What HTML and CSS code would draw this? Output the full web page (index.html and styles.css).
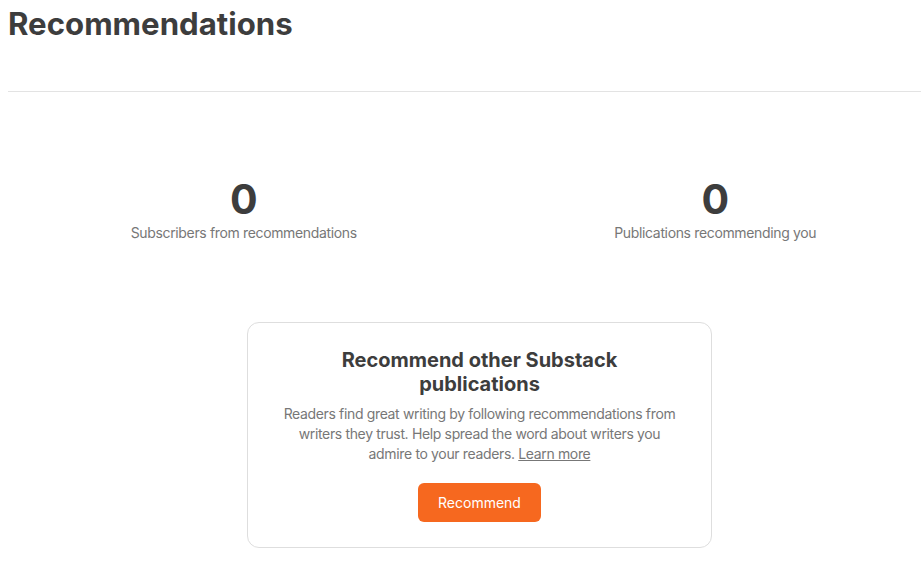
FILE: index.html
```html
<!DOCTYPE html>
<html>
<head>
<meta charset="utf-8">
<link rel="stylesheet" href="styles.css">
</head>
<body>
<main class="page">
  <h1 class="title">Recommendations</h1>
  <hr class="divider">
  <section class="stats">
    <div class="stat">
      <div class="stat-value">0</div>
      <div class="stat-label">Subscribers from recommendations</div>
    </div>
    <div class="stat">
      <div class="stat-value">0</div>
      <div class="stat-label">Publications recommending you</div>
    </div>
  </section>
  <section class="card-wrap">
    <div class="card">
      <h2 class="card-title">Recommend other Substack publications</h2>
      <p class="card-text">Readers find great writing by following recommendations from writers they trust. Help spread the word about writers you admire to your readers. <a class="link" href="#">Learn more</a></p>
      <button class="btn">Recommend</button>
    </div>
  </section>
</main>
</body>
</html>
```
FILE: styles.css
```css
html, body {
  overflow: hidden;
}
body {
  margin: 0;
  padding: 0 8px;
  background: #ffffff;
  font-family: Inter, "Noto Sans", sans-serif;
  color: #3d3d3d;
}
.page {
  width: 943px;
}
.title {
  margin: 0;
  padding-top: 5px;
  font-size: 31.2px;
  line-height: 38px;
  font-weight: 700;
  color: #3d3d3d;
}
.divider {
  margin: 48px 0 0;
  border: 0;
  border-top: 1px solid #e3e3e3;
}
.stats {
  display: grid;
  grid-template-columns: 1fr 1fr;
  padding-top: 85px;
}
.stat {
  display: flex;
  flex-direction: column;
  align-items: center;
}
.stat-value {
  font-size: 41px;
  line-height: 44px;
  font-weight: 700;
  color: #3d3d3d;
}
.stat-label {
  margin-top: 2px;
  font-size: 14px;
  line-height: 20px;
  letter-spacing: -0.35px;
  color: #777777;
}
.card-wrap {
  display: flex;
  justify-content: center;
  padding-top: 79px;
}
.card {
  width: 465px;
  box-sizing: border-box;
  border: 1px solid #dedede;
  border-radius: 12px;
  padding: 25px 32px 25px;
  display: flex;
  flex-direction: column;
  align-items: center;
  text-align: center;
}
.card-title {
  margin: 0;
  max-width: 300px;
  font-size: 20px;
  line-height: 24px;
  font-weight: 700;
  color: #3d3d3d;
}
.card-text {
  margin: 8px 0 0;
  font-size: 14px;
  line-height: 20px;
  letter-spacing: -0.35px;
  color: #777777;
}
.link {
  color: #777777;
  text-decoration: underline;
}
.btn {
  margin-top: 19px;
  width: 123px;
  height: 39px;
  border: 0;
  border-radius: 6px;
  background: #f6681f;
  color: #ffffff;
  font-family: Inter, "Noto Sans", sans-serif;
  font-size: 14px;
}
```
